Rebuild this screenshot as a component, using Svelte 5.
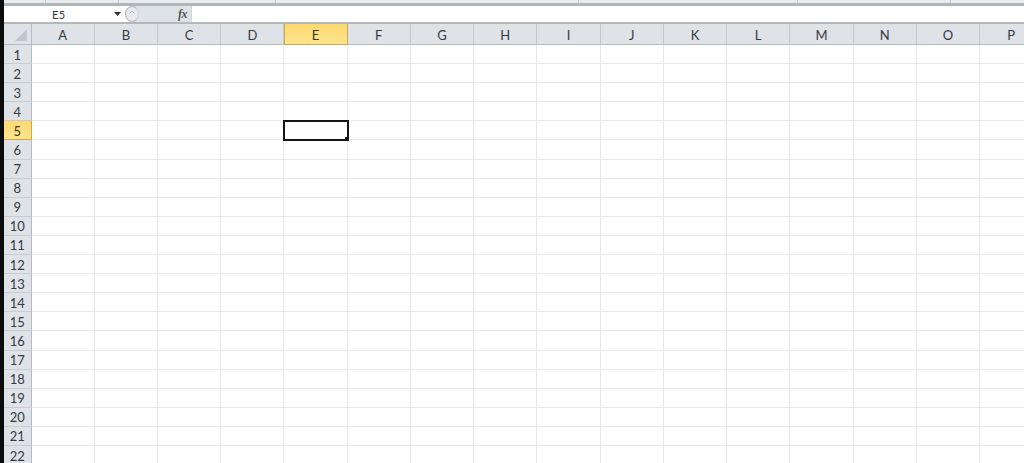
<script>
	const columns = "ABCDEFGHIJKLMNOP".split("");
	const rows = Array.from({ length: 22 }, (_, i) => i + 1);
	const selectedCol = "E";
	const selectedRow = 5;
</script>

<div class="window">
	<div class="ribbon-edge">
		<span class="tick t1"></span>
		<span class="tick t2"></span>
		<span class="tick t3"></span>
		<span class="tick t4"></span>
		<span class="tick t5"></span>
		<span class="tick t6"></span>
	</div>

	<div class="formula-bar">
		<div class="name-box">
			<span class="name">E5</span>
			<svg class="caret" width="7" height="4" viewBox="0 0 7 4"><path d="M0 0h7L3.5 4z" fill="#333" /></svg>
		</div>
		<div class="fx-box">
			<span class="collapse">
				<svg width="6" height="4" viewBox="0 0 6 4"><path d="M0.5 3.5L3 1l2.5 2.5" fill="none" stroke="#a8adb3" /></svg>
			</span>
			<span class="fx">fx</span>
		</div>
		<div class="formula-input"></div>
	</div>

	<div class="sheet">
		<div class="corner">
			<svg width="12" height="12" viewBox="0 0 12 12"><path d="M12 0v12H0z" fill="#c2c6cb" /></svg>
		</div>
		{#each columns as col}
			<div class="col-head" class:active={col === selectedCol}>{col}</div>
		{/each}
		{#each rows as row}
			<div class="row-head" class:active={row === selectedRow}>{row}</div>
			{#each columns as col}
				<div class="cell" class:selected={col === selectedCol && row === selectedRow}></div>
			{/each}
		{/each}
	</div>
</div>

<style>
	:global(body) {
		margin: 0;
		background: #fff;
	}

	.window {
		width: 1024px;
		height: 463px;
		overflow: hidden;
		box-sizing: border-box;
		border-left: 4px solid #0c0c0c;
		font-family: Lato, "Liberation Sans", sans-serif;
		color: #343a40;
		background: #fff;
	}

	.ribbon-edge {
		position: relative;
		height: 3px;
		background: #e9ecef;
		border-bottom: 3px solid #b0b5b9;
	}

	.tick {
		position: absolute;
		top: 0;
		width: 1px;
		height: 3px;
		background: #c5c9cd;
	}

	.t1 { left: 41px; }
	.t2 { left: 114px; }
	.t3 { left: 271px; }
	.t4 { left: 574px; }
	.t5 { left: 793px; }
	.t6 { left: 946px; }

	.formula-bar {
		display: flex;
		height: 16px;
		border-bottom: 2px solid #b4b8bc;
		background: #fff;
	}

	.name-box {
		width: 121px;
		display: flex;
		align-items: center;
		font-size: 11px;
		letter-spacing: 0.4px;
	}

	.name {
		margin-left: 48px;
		flex: 1;
	}

	.caret {
		margin-right: 4px;
	}

	.fx-box {
		width: 66px;
		display: flex;
		align-items: center;
		justify-content: space-between;
		background: #dfe3e8;
		border-radius: 8px 0 0 8px;
		box-sizing: border-box;
		padding-right: 4px;
	}

	.collapse {
		width: 14px;
		height: 16px;
		display: flex;
		align-items: flex-start;
		justify-content: center;
		padding-top: 3px;
		box-sizing: border-box;
		background: #e8eaed;
		border: 1px solid #b4b9be;
		border-right-color: #cfd3d7;
		border-radius: 50%;
	}

	.fx {
		font-family: "Liberation Serif", serif;
		font-style: italic;
		font-weight: bold;
		font-size: 12px;
		letter-spacing: -0.5px;
		color: #555;
	}

	.formula-input {
		flex: 1;
		background: #fff;
		border-left: 1px solid #d0d3d7;
	}

	.sheet {
		display: grid;
		grid-template-columns: 27.5px repeat(16, 63.24px);
		grid-template-rows: 21px repeat(22, 19.1px);
	}

	.corner {
		display: flex;
		align-items: flex-end;
		justify-content: flex-end;
		padding: 0 4px 3px 0;
		background: #dfe3e8;
		border-right: 1px solid #b5bac0;
		border-bottom: 1px solid #b5bac0;
		box-sizing: border-box;
	}

	.col-head {
		display: flex;
		align-items: center;
		justify-content: center;
		padding-top: 1px;
		font-size: 13px;
		background: #dfe2e7;
		border-right: 1px solid #c3c7cc;
		border-bottom: 1px solid #b5bac0;
		box-sizing: border-box;
	}

	.col-head.active {
		color: #3a3420;
		background: linear-gradient(#fbd96e, #fde58f);
		border-right-color: #d2a94a;
		border-bottom-color: #d2a94a;
		box-shadow: inset 1px 0 0 #d2a94a;
	}

	.row-head {
		display: flex;
		align-items: center;
		justify-content: center;
		padding-top: 1px;
		font-size: 13px;
		background: #dfe3e8;
		border-right: 1px solid #b5bac0;
		border-bottom: 1px solid #c9cdd2;
		box-sizing: border-box;
	}

	.row-head.active {
		color: #3a3420;
		background: linear-gradient(#fbd96e, #fde58f);
		border-right-color: #d2a94a;
		border-bottom-color: #d2a94a;
	}

	.cell {
		border-right: 1px solid #e8e8e8;
		border-bottom: 1px solid #e8e8e8;
		box-sizing: border-box;
		background: #fff;
	}

	.cell.selected {
		position: relative;
		z-index: 1;
		outline: 2px solid #151515;
		outline-offset: -1px;
	}

	.cell.selected::after {
		content: "";
		position: absolute;
		right: -2px;
		bottom: -2px;
		width: 4px;
		height: 4px;
		background: #151515;
	}
</style>
